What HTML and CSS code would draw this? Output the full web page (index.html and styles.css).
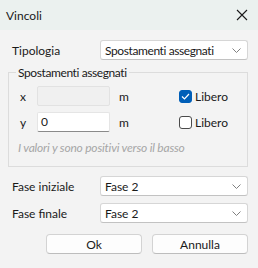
FILE: index.html
```html
<!DOCTYPE html>
<html lang="it">
<head>
    <meta charset="UTF-8">
    <title>Vincoli</title>
    <link rel="stylesheet" href="styles.css">
</head>
<body>

<div class="window">
    <div class="titlebar">
        <span class="title">Vincoli</span>
        <svg class="close" width="12" height="12" viewBox="0 0 12 12">
            <path d="M1 1 L11 11 M11 1 L1 11" stroke="#1a1a1a" stroke-width="1.1" fill="none"/>
        </svg>
    </div>

    <div class="content">
        <div class="form-row">
            <label>Tipologia</label>
            <div class="combo">
                <span class="tight">Spostamenti assegnati</span>
                <svg class="chev" width="9" height="5" viewBox="0 0 9 5"><path d="M0.5 0.5 L4.5 4.5 L8.5 0.5" stroke="#808080" fill="none"/></svg>
            </div>
        </div>

        <fieldset class="group">
            <legend class="tight">Spostamenti assegnati</legend>
            <div class="grid">
                <span class="axis">x</span>
                <div class="field disabled"></div>
                <span class="unit">m</span>
                <div class="check">
                    <span class="box checked">
                        <svg width="9" height="7" viewBox="0 0 9 7"><path d="M1 3.5 L3.5 6 L8 1" stroke="#fff" stroke-width="1.2" fill="none"/></svg>
                    </span>
                    Libero
                </div>

                <span class="axis">y</span>
                <div class="field">0</div>
                <span class="unit">m</span>
                <div class="check">
                    <span class="box"></span>
                    Libero
                </div>
            </div>
            <p class="hint">I valori y sono positivi verso il basso</p>
        </fieldset>

        <div class="form-row phase">
            <label>Fase iniziale</label>
            <div class="combo">
                <span>Fase 2</span>
                <svg class="chev" width="9" height="5" viewBox="0 0 9 5"><path d="M0.5 0.5 L4.5 4.5 L8.5 0.5" stroke="#808080" fill="none"/></svg>
            </div>
        </div>
        <div class="form-row phase2">
            <label>Fase finale</label>
            <div class="combo">
                <span>Fase 2</span>
                <svg class="chev" width="9" height="5" viewBox="0 0 9 5"><path d="M0.5 0.5 L4.5 4.5 L8.5 0.5" stroke="#808080" fill="none"/></svg>
            </div>
        </div>

        <div class="buttons">
            <button>Ok</button>
            <button>Annulla</button>
        </div>
    </div>
</div>

</body>
</html>
```

FILE: styles.css
```css
body {
    margin: 0;
    font-family: "Segoe UI", Lato, sans-serif;
    font-size: 12px;
    color: #1a1a1a;
    background: #f3f3f3;
}
.window {
    width: 258px;
    height: 268px;
    background: #f3f3f3;
    box-sizing: border-box;
}
.titlebar {
    height: 30px;
    display: flex;
    align-items: center;
    justify-content: space-between;
    padding: 0 10px 0 6px;
    background: #ebf1ef;
}
.close {
    display: block;
}
.content {
    padding: 10px 10px 0 12px;
}
.tight {
    letter-spacing: -0.4px;
}
.form-row {
    display: flex;
    align-items: center;
    height: 20px;
}
.form-row label {
    width: 88px;
}
.combo {
    flex: 1;
    height: 20px;
    box-sizing: border-box;
    display: flex;
    align-items: center;
    justify-content: space-between;
    padding: 0 6px 0 4px;
    white-space: nowrap;
    background: #fff;
    border: 1px solid #d6d6d6;
    border-bottom-color: #c2c2c2;
    border-radius: 3px;
}
.chev {
    display: block;
    flex-shrink: 0;
}
.group {
    margin: 5px 0 0 -4px;
    padding: 6px 0 11px 11px;
    border: 1px solid #dcdcdc;
}
.group legend {
    padding: 0 2px;
    margin-left: -4px;
}
.grid {
    display: grid;
    grid-template-columns: 17px 82px 60px auto;
    grid-auto-rows: 20px;
    row-gap: 6px;
    align-items: center;
}
.field {
    width: 73px;
    height: 20px;
    box-sizing: border-box;
    padding: 0 3px;
    line-height: 17px;
    background: #fff;
    border: 1px solid #e5e5e5;
    border-bottom: 1px solid #8a8a8a;
    border-radius: 2px;
}
.field.disabled {
    background: #f0f0f0;
    border: 1px solid #e2e2e2;
}
.check {
    display: flex;
    align-items: center;
    gap: 3px;
}
.box {
    width: 13px;
    height: 13px;
    box-sizing: border-box;
    border: 1px solid #4a4a4a;
    border-radius: 3px;
    background: #fff;
    display: flex;
    align-items: center;
    justify-content: center;
}
.box.checked {
    background: #005fb8;
    border-color: #005fb8;
}
.hint {
    margin: 8px 0 0 -2px;
    font-style: italic;
    letter-spacing: -0.2px;
    color: #a6a6a6;
}
.phase {
    margin-top: 9px;
}
.phase2 {
    margin-top: 7px;
}
.buttons {
    display: flex;
    justify-content: flex-end;
    gap: 10px;
    margin-top: 11px;
}
button {
    width: 96px;
    height: 20px;
    font-family: inherit;
    font-size: 12px;
    color: #1a1a1a;
    background: #fdfdfd;
    border: 1px solid #d3d3d3;
    border-bottom-color: #bdbdbd;
    border-radius: 4px;
}
```
